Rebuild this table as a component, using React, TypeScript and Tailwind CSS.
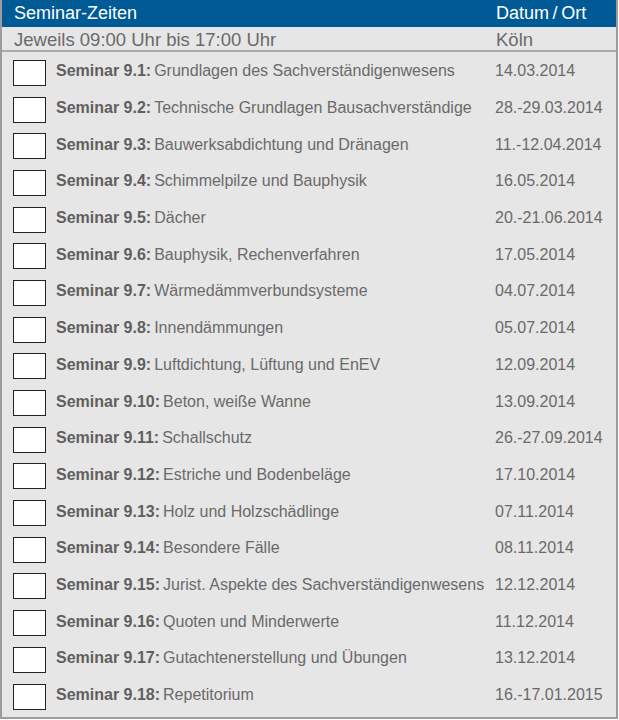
const seminars = [
  { nr: "9.1", title: "Grundlagen des Sachverständigenwesens", date: "14.03.2014" },
  { nr: "9.2", title: "Technische Grundlagen Bausachverständige", date: "28.-29.03.2014" },
  { nr: "9.3", title: "Bauwerksabdichtung und Dränagen", date: "11.-12.04.2014" },
  { nr: "9.4", title: "Schimmelpilze und Bauphysik", date: "16.05.2014" },
  { nr: "9.5", title: "Dächer", date: "20.-21.06.2014" },
  { nr: "9.6", title: "Bauphysik, Rechenverfahren", date: "17.05.2014" },
  { nr: "9.7", title: "Wärmedämmverbundsysteme", date: "04.07.2014" },
  { nr: "9.8", title: "Innendämmungen", date: "05.07.2014" },
  { nr: "9.9", title: "Luftdichtung, Lüftung und EnEV", date: "12.09.2014" },
  { nr: "9.10", title: "Beton, weiße Wanne", date: "13.09.2014" },
  { nr: "9.11", title: "Schallschutz", date: "26.-27.09.2014" },
  { nr: "9.12", title: "Estriche und Bodenbeläge", date: "17.10.2014" },
  { nr: "9.13", title: "Holz und Holzschädlinge", date: "07.11.2014" },
  { nr: "9.14", title: "Besondere Fälle", date: "08.11.2014" },
  { nr: "9.15", title: "Jurist. Aspekte des Sachverständigenwesens", date: "12.12.2014" },
  { nr: "9.16", title: "Quoten und Minderwerte", date: "11.12.2014" },
  { nr: "9.17", title: "Gutachtenerstellung und Übungen", date: "13.12.2014" },
  { nr: "9.18", title: "Repetitorium", date: "16.-17.01.2015" },
];

const App = () => {
  return (
    <div className="w-[618px] h-[719px] bg-[#e6e6e6] border-x-2 border-b-2 border-[#9c9c9c] font-['Liberation_Sans',Arial,sans-serif] flex flex-col">
      <div className="h-[27px] bg-[#005a96] flex items-center text-white text-[18px] shrink-0">
        <span className="pl-[12px] flex-1">Seminar-Zeiten</span>
        <span className="w-[120px]">Datum&thinsp;/&thinsp;Ort</span>
      </div>

      <div className="h-[25px] flex items-center text-[#6a6a6a] text-[18.5px] border-b-2 border-[#ababab] shrink-0 pt-[3px]">
        <span className="pl-[12px] flex-1">Jeweils 09:00 Uhr bis 17:00 Uhr</span>
        <span className="w-[120px]">Köln</span>
      </div>

      <div className="flex flex-col pt-[1px]">
        {seminars.map((s) => (
          <div key={s.nr} className="h-[36.7px] flex items-center text-[16px] text-[#6a6a6a]">
            <div className="ml-[11px] w-[33px] h-[26px] bg-white border border-[#222] shrink-0 mt-[3px]" />
            <div className="ml-[10px] flex-1 whitespace-nowrap">
              <span className="font-bold text-[#5f5f5f]">Seminar {s.nr}:</span>
              <span className="ml-[3px]">{s.title}</span>
            </div>
            <div className="w-[121px] whitespace-nowrap">{s.date}</div>
          </div>
        ))}
      </div>
    </div>
  );
};

export default App;
